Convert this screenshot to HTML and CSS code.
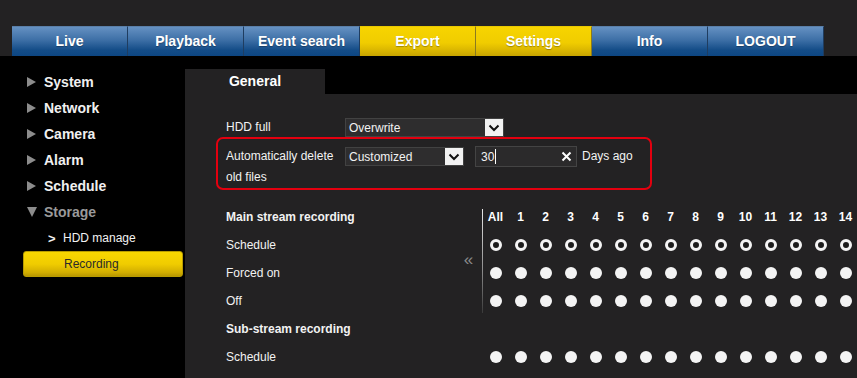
FILE: index.html
```html
<!DOCTYPE html>
<html lang="en">
<head>
    <meta charset="UTF-8">
    <meta name="viewport" content="width=device-width, initial-scale=1.0">
    <title>Recording</title>
    <link rel="stylesheet" href="styles.css">
</head>
<body>

<div class="topbar">
    <nav class="tabs">
        <a class="tab">Live</a>
        <a class="tab">Playback</a>
        <a class="tab">Event search</a>
        <a class="tab yellow">Export</a>
        <a class="tab yellow">Settings</a>
        <a class="tab">Info</a>
        <a class="tab">LOGOUT</a>
    </nav>
</div>

<div class="main">
    <aside class="sidebar">
        <ul class="menu">
            <li class="menu-item"><span class="tri"></span>System</li>
            <li class="menu-item"><span class="tri"></span>Network</li>
            <li class="menu-item"><span class="tri"></span>Camera</li>
            <li class="menu-item"><span class="tri"></span>Alarm</li>
            <li class="menu-item"><span class="tri"></span>Schedule</li>
            <li class="menu-item open"><span class="tri-down"></span>Storage</li>
            <li class="sub-item"><span class="chev">&gt;</span>HDD manage</li>
            <li class="sub-item active">Recording</li>
        </ul>
    </aside>

    <section class="panel">
        <div class="panel-tabs">
            <div class="panel-tab">General</div>
        </div>
        <div class="panel-body">
            <div class="form-row">
                <div class="label">HDD full</div>
                <div class="select wide">
                    <span class="select-text">Overwrite</span>
                    <span class="select-btn"><svg width="12" height="8" viewBox="0 0 12 8"><path d="M1.5 1.5 L6 6 L10.5 1.5" fill="none" stroke="#111" stroke-width="2"/></svg></span>
                </div>
            </div>

            <div class="highlight">
                <div class="form-row">
                    <div class="label">Automatically delete<br>old files</div>
                    <div class="select narrow">
                        <span class="select-text">Customized</span>
                        <span class="select-btn"><svg width="12" height="8" viewBox="0 0 12 8"><path d="M1.5 1.5 L6 6 L10.5 1.5" fill="none" stroke="#111" stroke-width="2"/></svg></span>
                    </div>
                    <div class="text-input">
                        <span class="value">30<span class="caret"></span></span>
                        <svg class="clear" width="11" height="11" viewBox="0 0 11 11"><path d="M1.5 1.5 L9.5 9.5 M9.5 1.5 L1.5 9.5" stroke="#fff" stroke-width="2"/></svg>
                    </div>
                    <span class="unit">Days ago</span>
                </div>
            </div>

            <div class="rec-grid" id="recGrid">
                <div class="rec-label bold">Main stream recording</div>
                <div class="back-arrow">&laquo;</div>
                <div class="divider"></div>
            </div>
        </div>
    </section>
</div>

<script>
    // Build the channel header and radio rows
    const grid = document.getElementById('recGrid');
    const channels = ['All'];
    for (let i = 1; i <= 14; i++) channels.push(String(i));

    channels.forEach((ch, i) => {
        const cell = document.createElement('div');
        cell.className = 'ch-head' + (i === 0 ? ' col-start' : '');
        cell.textContent = ch;
        grid.appendChild(cell);
    });

    const rows = [
        { label: 'Schedule', kind: 'ring' },
        { label: 'Forced on', kind: 'dot' },
        { label: 'Off', kind: 'dot' },
        { label: 'Sub-stream recording', kind: 'title' },
        { label: 'Schedule', kind: 'dot' }
    ];

    rows.forEach(row => {
        const label = document.createElement('div');
        label.className = 'rec-label' + (row.kind === 'title' ? ' bold' : '');
        label.textContent = row.label;
        grid.appendChild(label);

        channels.forEach((ch, i) => {
            const cell = document.createElement('div');
            cell.className = 'radio-cell' + (i === 0 ? ' col-start' : '');
            if (row.kind !== 'title') {
                const r = document.createElement('span');
                r.className = 'radio ' + row.kind;
                cell.appendChild(r);
            }
            grid.appendChild(cell);
        });
    });
</script>

</body>
</html>
```

FILE: styles.css
```css
html, body {
    margin: 0;
    padding: 0;
}
body {
    background-color: #000;
    font-family: "Liberation Sans", Arial, sans-serif;
    color: #f2f2f2;
    width: 857px;
    height: 378px;
    overflow: hidden;
}

/* top navigation */
.topbar {
    background-color: #232223;
    height: 56px;
    padding: 26px 0 0 12px;
    box-sizing: border-box;
}
.tabs {
    display: flex;
}
.tab {
    width: 116px;
    height: 30px;
    line-height: 29px;
    text-align: center;
    font-size: 14px;
    font-weight: bold;
    color: #fff;
    background: linear-gradient(#6591c2, #3d6fa6 45%, #134c87 80%, #0d4682);
    border-right: 1px solid #1f3d60;
    border-top: 1px solid #5a7fa8;
    box-sizing: border-box;
    text-shadow: 0 1px 1px rgba(0, 0, 0, 0.3);
}
.tab.yellow {
    background: linear-gradient(#f7d400, #f0cc00 55%, #d6b200 85%, #c7a400);
    border-top-color: #e8c800;
    border-right-color: #8a7a20;
}

/* layout */
.main {
    display: flex;
}
.sidebar {
    width: 185px;
    flex-shrink: 0;
    padding-top: 13px;
}
.menu {
    list-style: none;
    margin: 0;
    padding: 0;
}
.menu-item {
    height: 26px;
    display: flex;
    align-items: center;
    padding-left: 27px;
    font-size: 14px;
    font-weight: bold;
    color: #f0f0f0;
}
.tri {
    width: 0;
    height: 0;
    border-left: 9px solid #8c8c8c;
    border-top: 5px solid transparent;
    border-bottom: 5px solid transparent;
    margin-right: 8px;
}
.tri-down {
    width: 0;
    height: 0;
    border-top: 10px solid #8c8c8c;
    border-left: 5px solid transparent;
    border-right: 5px solid transparent;
    margin-right: 7px;
}
.menu-item.open {
    color: #9a9a9a;
}
.sub-item {
    height: 26px;
    display: flex;
    align-items: center;
    padding-left: 63px;
    font-size: 12px;
    color: #f2f2f2;
    position: relative;
}
.chev {
    position: absolute;
    left: 48px;
    font-weight: bold;
    font-size: 13px;
}
.sub-item.active {
    margin: 0 2px 0 23px;
    padding-left: 40px;
    height: 24px;
    color: #2a2a2a;
    border-radius: 3px;
    border: 1px solid #b89c00;
    background: linear-gradient(#f8d700, #f0cc00 50%, #d2ae00 85%, #b99800);
}

/* right panel */
.panel {
    flex: 1;
    margin-top: 13px;
}
.panel-tabs {
    display: flex;
    height: 25px;
}
.panel-tab {
    width: 140px;
    background-color: #232223;
    text-align: center;
    line-height: 25px;
    font-size: 14px;
    font-weight: bold;
    color: #fff;
}
.panel-body {
    background-color: #232223;
    padding: 24px 0 0 41px;
    height: 400px;
}

.form-row {
    display: flex;
    align-items: flex-start;
    font-size: 12px;
}
.label {
    width: 119px;
    line-height: 19px;
    flex-shrink: 0;
}
.highlight .label {
    line-height: 21px;
}
.select {
    height: 19px;
    display: flex;
    align-items: stretch;
    background-color: #2e2d2e;
    border: 1px solid #424242;
    box-sizing: border-box;
}
.select.wide {
    width: 159px;
}
.select.narrow {
    width: 119px;
    margin-top: 1px;
}
.select-text {
    flex: 1;
    padding-left: 3px;
    line-height: 18px;
    font-size: 12px;
    color: #f2f2f2;
}
.select-btn {
    width: 18px;
    background-color: #f2f2f2;
    display: flex;
    align-items: center;
    justify-content: center;
}

.highlight {
    margin: 0 0 0 -10px;
    width: 436px;
    height: 53px;
    box-sizing: border-box;
    border: 2px solid #e3000f;
    border-radius: 7px;
    padding: 7px 0 0 8px;
}
.text-input {
    width: 102px;
    height: 21px;
    margin-left: 11px;
    box-sizing: border-box;
    border: 1px solid #444;
    background-color: #2b2a2b;
    display: flex;
    align-items: center;
    justify-content: space-between;
    padding: 0 4px 0 5px;
}
.value {
    font-size: 12px;
    display: flex;
    align-items: center;
}
.caret {
    display: inline-block;
    width: 1px;
    height: 15px;
    background-color: #fff;
    margin-left: 1px;
}
.unit {
    margin-left: 5px;
    line-height: 21px;
}

/* recording table */
.rec-grid {
    margin-top: 13px;
    display: grid;
    grid-template-columns: 229px 27px 1px repeat(15, 25px);
    grid-auto-rows: 28px;
    font-size: 12px;
}
.rec-label {
    grid-column: 1;
    display: flex;
    align-items: center;
}
.bold {
    font-weight: bold;
}
.back-arrow {
    grid-column: 2;
    grid-row: 1 / 5;
    display: flex;
    align-items: center;
    justify-content: center;
    color: #8a8a8a;
    font-size: 17px;
    padding-top: 2px;
}
.divider {
    grid-column: 3;
    grid-row: 1 / 5;
    margin: 6px 0 2px;
    background: linear-gradient(#e8e8e8, #8a8a8a 60%, #3a3a3a);
}
.col-start {
    grid-column-start: 4;
}
.ch-head {
    display: flex;
    align-items: center;
    justify-content: center;
    font-weight: bold;
    color: #fff;
}
.radio-cell {
    display: flex;
    align-items: center;
    justify-content: center;
}
.radio {
    width: 12px;
    height: 12px;
    border-radius: 50%;
    box-sizing: border-box;
}
.radio.dot {
    background-color: #f4f4f4;
}
.radio.ring {
    border: 3px solid #f4f4f4;
    background-color: #1c1c1c;
}
```
